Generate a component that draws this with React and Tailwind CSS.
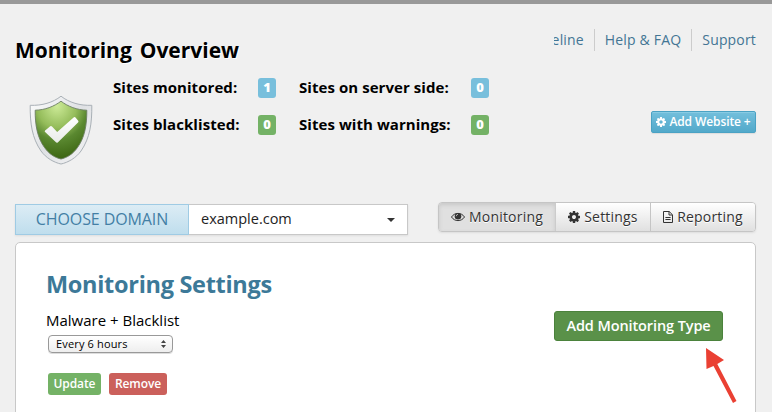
function Cog({ className }) {
  return (
    <svg className={className} viewBox="128 128 1536 1536" fill="currentColor">
      <path d="M1152 896q0-106-75-181t-181-75-181 75-75 181 75 181 181 75 181-75 75-181zm512-109v222q0 12-8 23t-20 13l-185 28q-19 54-39 91 35 50 107 138 10 12 10 25t-9 23q-27 37-99 108t-94 71q-12 0-26-9l-138-108q-44 23-91 38-16 136-29 186-7 28-36 28h-222q-14 0-24.500-8.500t-11.500-21.500l-28-184q-49-16-90-37l-141 107q-10 9-25 9-14 0-25-11-126-114-165-168-7-10-7-23 0-12 8-23 15-21 51-66.500t54-70.500q-27-50-41-99l-183-27q-13-2-21-12.500t-8-23.500v-222q0-12 8-23t19-13l186-28q14-46 39-92-40-57-107-138-10-12-10-24 0-10 9-23 26-36 98.500-107.500t94.500-71.500q13 0 26 10l138 107q44-23 91-38 16-136 29-186 7-28 36-28h222q14 0 24.500 8.500t11.500 21.500l28 184q49 16 90 37l142-107q9-9 24-9 13 0 25 10 129 119 165 170 7 8 7 22 0 12-8 23-15 21-51 66.500t-54 70.500q26 50 41 98l183 28q13 2 21 12.500t8 23.500z" />
    </svg>
  );
}

function Shield() {
  return (
    <svg className="block h-[70px] w-[64px]" viewBox="0 0 64 70">
      <defs>
        <linearGradient id="rim" x1="0" y1="0" x2="1" y2="1">
          <stop offset="0" stopColor="#fdfdfd" />
          <stop offset="0.5" stopColor="#dfe1e4" />
          <stop offset="1" stopColor="#f5f5f6" />
        </linearGradient>
        <radialGradient id="green" cx="0.42" cy="0.08" r="0.95">
          <stop offset="0" stopColor="#cdeb98" />
          <stop offset="0.4" stopColor="#94bc5a" />
          <stop offset="0.62" stopColor="#5a8830" />
          <stop offset="1" stopColor="#39620f" />
        </radialGradient>
        <linearGradient id="tick" x1="0" y1="0" x2="0" y2="1">
          <stop offset="0" stopColor="#fff" />
          <stop offset="1" stopColor="#e9ebe8" />
        </linearGradient>
      </defs>
      <path d="M32 1.2C24 7.5 13 10.8 1.2 10.3C1 28 3 43 12 56C17 63 25 67.5 32 69C39 67.5 47 63 52 56C61 43 63 28 62.8 10.3C51 10.8 40 7.5 32 1.2Z" fill="url(#rim)" stroke="#a9b0b6" strokeWidth="1" />
      <path d="M32 6.2C25 11.5 16 15 6.2 15.2C6 30 8.5 43 15.5 52.5C20 59 26 62.7 32 64C38 62.7 44 59 48.5 52.5C55.5 43 58 30 57.800 15.200C48 15 39 11.500 32 6.200Z" fill="url(#green)" stroke="#6c7e62" strokeWidth="0.9" />
      <path d="M18.300 33.800L21.200 31.200Q22.200 30.500 23 31.400L28.200 37L44.600 22.500Q45.600 21.700 46.500 22.600L49.200 25.700Q49.900 26.600 49 27.500L29 47.200Q27.800 48.300 26.700 47.100L16.100 37Q15.200 36.200 16.100 35.400Z" fill="url(#tick)" />
    </svg>
  );
}

function Eye() {
  return (
    <svg className="block h-[10px] w-[14px]" viewBox="0 0 14 10">
      <path d="M.5 5C3.5 .2 10.5 .2 13.5 5C10.5 9.8 3.5 9.8 .5 5Z" fill="none" stroke="#333" strokeWidth="1" />
      <circle cx="7" cy="4.3" r="3.3" fill="#333" />
      <path d="M5.2 4.2Q5.3 2.5 7 2.3" fill="none" stroke="#e4e4e4" strokeWidth=".7" />
    </svg>
  );
}

function FileIcon() {
  return (
    <svg className="block h-[12px] w-[10px]" viewBox="0 0 10 12" fill="none" stroke="#333">
      <path d="M.5 .5H6.2L9.5 3.8V11.5H.5ZM6 .5V4H9.5M2.4 6.5H7.6M2.4 8.5H7.6" />
    </svg>
  );
}

function Stat({ label, value, color }) {
  return (
    <div className="flex h-5 items-center justify-between">
      <span className="pb-0.5 text-[15px] font-bold leading-[18px] tracking-[0.06px] text-black">{label}</span>
      <span className={`flex h-5 w-[18px] items-center justify-center rounded-[3px] text-[13px] font-extrabold text-white ${color}`}>{value}</span>
    </div>
  );
}

export default function App() {
  return (
    <div className="h-[412px] w-[772px] overflow-hidden whitespace-nowrap border-t-4 border-[#999] bg-[#f0f0f0] font-['Open_Sans',sans-serif]">
      <header className="flex h-[198px] justify-between pl-[15px] pr-4">
        <div>
          <h1 className="mt-[32px] text-[21px] font-bold leading-7 text-black [text-shadow:1px_1px_0_#fff] [word-spacing:2.5px]">Monitoring Overview</h1>
          <div className="mt-[14px] flex">
            <div className="ml-[14px] mt-[17px]"><Shield /></div>
            <div className="ml-5 grid h-[57px] grid-cols-[163px_190px] content-between gap-x-[23px]">
              <Stat label="Sites monitored:" value="1" color="bg-[#78bfdc]" />
              <Stat label="Sites on server side:" value="0" color="bg-[#78bfdc]" />
              <Stat label="Sites blacklisted:" value="0" color="bg-[#74b266]" />
              <Stat label="Sites with warnings:" value="0" color="bg-[#74b266]" />
            </div>
          </div>
        </div>
        <div className="flex flex-col items-end">
          <nav className="mt-[25px] flex h-[22px] text-[14px] leading-[22px] tracking-[0.17px] text-[#437594]">
            <a className="flex w-[41px] justify-end overflow-hidden border-r border-[#ccc] pr-[10px]">Timeline</a>
            <a className="border-r border-[#ccc] px-[10px]">Help &amp; FAQ</a>
            <a className="pl-[10px]">Support</a>
          </nav>
          <button className="mt-[60px] flex h-[22px] w-[105px] items-center justify-center gap-[3px] rounded-[2px] border border-[#4aa2c4] bg-linear-to-b from-[#73bfdc] to-[#52a9ca] text-[12px] font-semibold tracking-[-0.1px] text-white shadow-[inset_0_1px_0_#89cbe3,0_1px_1px_#ddd]">
            <Cog className="size-[10px]" />Add Website +
          </button>
        </div>
      </header>

      <div className="flex h-[40px] justify-between pl-[15px] pr-4">
        <div className="mt-[2px] flex h-[31px] w-[393px] shadow-[0_1px_2px_#ddd]">
          <div className="flex w-[174px] items-center justify-center border border-[#9fcbe4] bg-linear-to-b from-[#dcecf5] to-[#bfdeed] pb-0.5 text-[16px] tracking-[-0.1px] text-[#437fa5]">CHOOSE DOMAIN</div>
          <div className="flex flex-1 items-center justify-between border border-l-0 border-[#c8c8c8] bg-white px-3">
            <span className="pb-px text-[14.5px] text-[#222]">example.com</span>
            <svg className="h-[4px] w-[8px]" viewBox="0 0 8 4"><path d="M0 0H8L4 4Z" fill="#333" /></svg>
          </div>
        </div>
        <div className="flex h-[30px] w-[318px] overflow-hidden rounded-[4px] border border-[#c5c5c5] text-[14px] tracking-[0.2px] text-[#333] shadow-[0_1px_2px_#ddd] [text-shadow:0_1px_0_#fff]">
          <div className="flex w-[117px] items-center justify-center gap-1 border-r border-[#ccc] bg-[#e0e0e0] pb-px shadow-[inset_0_2px_4px_#c8c8c8]"><Eye />Monitoring</div>
          <div className="flex w-[95px] items-center justify-center gap-1 border-r border-[#c5c5c5] bg-linear-to-b from-white to-[#e0e0e0] pb-px"><Cog className="size-[12px]" />Settings</div>
          <div className="flex flex-1 items-center justify-center gap-1 bg-linear-to-b from-white to-[#e0e0e0] pb-px"><FileIcon />Reporting</div>
        </div>
      </div>

      <main className="ml-[15px] flex h-[180px] w-[741px] justify-between rounded-t-[5px] border border-[#c8c8c8] bg-white pl-[30px] pr-8">
        <div>
          <h2 className="mt-[25px] text-[23.5px] font-bold leading-8 tracking-[-0.3px] text-[#3c7998]">Monitoring Settings</h2>
          <div className="mt-[10px] text-[15px] leading-5 text-black">Malware + Blacklist</div>
          <div className="ml-0.5 mt-[5px] flex h-[18px] w-[125px] items-center justify-between rounded-[4px] border border-[#999] bg-linear-to-b from-white to-[#eee] pl-[7px] pr-[6px] text-[11px] tracking-[0.15px] text-black shadow-[0_1px_0_#ddd]">
            Every 6 hours
            <svg className="h-[8px] w-[5px]" viewBox="0 0 5 8"><path d="M0 3L2.5 0L5 3ZM0 5L2.5 8L5 5Z" fill="#444" /></svg>
          </div>
          <div className="ml-0.5 mt-5 flex gap-2 text-[12px] font-semibold tracking-[-0.1px] text-white">
            <button className="h-[22px] w-[53px] rounded-[3px] bg-[#74b266]">Update</button>
            <button className="h-[22px] w-[58px] rounded-[3px] bg-[#cb605b]">Remove</button>
          </div>
        </div>
        <div className="flex flex-col items-end pt-[68px]">
          <button className="h-[30px] w-[169px] rounded-[3px] border border-[#4b823c] bg-[#5a9149] text-[14.5px] font-semibold tracking-[-0.1px] text-white">Add Monitoring Type</button>
          <svg className="-mr-[14px] mt-[6px] h-[57px] w-[32px]" viewBox="0 0 32 57">
            <path d="M1 1L19 13L12.300 17L31.500 54L28 56L8.500 19L1.500 22Z" fill="#ea4033" />
          </svg>
        </div>
      </main>
    </div>
  );
}
